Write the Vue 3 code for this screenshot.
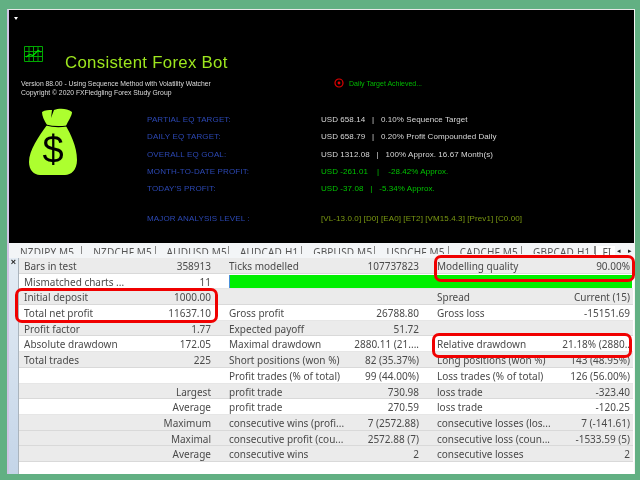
<script setup>
const labels = [
  { text: 'PARTIAL EQ TARGET:', value: 'USD 658.14   |   0.10% Sequence Target', cls: 'white' },
  { text: 'DAILY EQ TARGET:', value: 'USD 658.79   |   0.20% Profit Compounded Daily', cls: 'white' },
  { text: 'OVERALL EQ GOAL:', value: 'USD 1312.08   |   100% Approx. 16.67 Month(s)', cls: 'white' },
  { text: 'MONTH-TO-DATE PROFIT:', value: 'USD -261.01    |    -28.42% Approx.', cls: 'green' },
  { text: "TODAY'S PROFIT:", value: 'USD -37.08   |   -5.34% Approx.', cls: 'green' }
]
const tabs = ['NZDJPY M5', 'NZDCHF M5', 'AUDUSD M5', 'AUDCAD H1', 'GBPUSD M5', 'USDCHF M5', 'CADCHF M5', 'GBPCAD H1']
const rows = [
  ['Bars in test', '358913', 'Ticks modelled', '107737823', 'Modelling quality', '90.00%', 0],
  ['Mismatched charts ...', '11', '', '', '', '', 1],
  ['Initial deposit', '1000.00', '', '', 'Spread', 'Current (15)', 0],
  ['Total net profit', '11637.10', 'Gross profit', '26788.80', 'Gross loss', '-15151.69', 1],
  ['Profit factor', '1.77', 'Expected payoff', '51.72', '', '', 0],
  ['Absolute drawdown', '172.05', 'Maximal drawdown', '2880.11 (21....', 'Relative drawdown', '21.18% (2880..', 1],
  ['Total trades', '225', 'Short positions (won %)', '82 (35.37%)', 'Long positions (won %)', '143 (48.95%)', 0],
  ['', '', 'Profit trades (% of total)', '99 (44.00%)', 'Loss trades (% of total)', '126 (56.00%)', 1],
  ['', 'Largest', 'profit trade', '730.98', 'loss trade', '-323.40', 0],
  ['', 'Average', 'profit trade', '270.59', 'loss trade', '-120.25', 1],
  ['', 'Maximum', 'consecutive wins (profi...', '7 (2572.88)', 'consecutive losses (los...', '7 (-141.61)', 0],
  ['', 'Maximal', 'consecutive profit (cou...', '2572.88 (7)', 'consecutive loss (coun...', '-1533.59 (5)', 0],
  ['', 'Average', 'consecutive wins', '2', 'consecutive losses', '2', 0]
]
</script>

<template>
  <div class="page">
    <div class="window">
      <section class="chart">
        <div class="menu-arrow"></div>
        <header class="head">
          <svg class="logo" viewBox="0 0 19 16" width="19" height="16">
            <path d="M.5.5h18v15H.5zM.5 5.500h18M.5 10.500h18M5 .5v15M9.500.5v15M14 .5v15" fill="none" stroke="#00a800" />
            <path d="M2 11L6 8.500 9 9.500 14 4.500 17 6" fill="none" stroke="#00e000" stroke-width="1.200" />
          </svg>
          <h1 class="title">Consistent Forex Bot</h1>
        </header>
        <div class="info">
          <div class="version">
            <div>Version 88.00 - Using Sequence Method with Volatility Watcher</div>
            <div>Copyright © 2020 FXFledgling Forex Study Group</div>
          </div>
          <div class="achieved">
            <svg viewBox="0 0 10 10" width="10" height="10">
              <circle cx="5" cy="5" r="4" fill="none" stroke="#e00000" stroke-width="1.200" />
              <circle cx="5" cy="5" r="1.400" fill="#e00000" />
            </svg>
            <span>Daily Target Achieved...</span>
          </div>
        </div>
        <div class="main">
          <svg class="bag" viewBox="0 0 48 68" width="48" height="68">
            <path d="M18 17C15 12 13 8 13 4 16 2 20 2 23 2L22 10 25 2C30 0 38 0 43 4 43 8 39 13 37 18 41 25 48 38 48 52 48 62 42 67 36 67H11C5 67 0 62 0 54 0 42 10 28 18 17Z" fill="#adff2f" />
            <path d="M17 17C24 19 31 19 38 18" fill="none" stroke="#000" stroke-width="1.200" />
            <text x="24" y="55" text-anchor="middle" class="dollar">$</text>
          </svg>
          <div class="stats">
            <template v-for="l in labels" :key="l.text">
              <span class="lab">{{ l.text }}</span>
              <span :class="l.cls">{{ l.value }}</span>
            </template>
            <span class="lab major">MAJOR ANALYSIS LEVEL :</span>
            <span class="olive major">[VL-13.0.0] [D0] [EA0] [ET2] [VM15.4.3] [Prev1] [C0.00]</span>
          </div>
        </div>
      </section>

      <nav class="tabs">
        <span v-for="t in tabs" :key="t" class="tab">{{ t }}</span>
        <span class="tab active">FI</span>
        <span class="arrows"><i>◂</i><i>▸</i></span>
      </nav>

      <section class="report">
        <aside class="side">×</aside>
        <div class="table">
          <div v-for="(r, i) in rows" :key="i" class="row" :class="{ light: r[6] }">
            <span>{{ r[0] }}</span><span class="num">{{ r[1] }}</span>
            <template v-if="i === 1">
              <span class="bar"></span>
            </template>
            <template v-else>
              <span class="pad">{{ r[2] }}</span><span class="num">{{ r[3] }}</span>
              <span class="pad">{{ r[4] }}</span><span class="num">{{ r[5] }}</span>
            </template>
          </div>
          <div class="mark mark-a"></div>
          <div class="mark mark-b"></div>
          <div class="mark mark-c"></div>
        </div>
      </section>
    </div>
  </div>
</template>

<style>
html, body { margin: 0; background: #62b083; }
</style>

<style scoped>
.page {
  width: 640px; height: 480px; box-sizing: border-box;
  padding: 9px 5px 6px 7px; background: #62b083; overflow: hidden;
}
.window {
  height: 465px; display: flex; flex-direction: column;
  background: #fff; border-top: 1px solid #e6e6e6; border-left: 2px solid #cfc4e4;
  border-right: 1px solid #f4f4f4; box-sizing: border-box;
  filter: blur(.35px);
}
.chart {
  position: relative; height: 233px; flex: none; background: #000; overflow: hidden;
  font-family: "Liberation Sans", Arial, sans-serif; padding: 36px 0 0 12px; box-sizing: border-box;
}
.menu-arrow {
  position: absolute; left: 5px; top: 7px; width: 0; height: 0;
  border: 2px solid transparent; border-top: 3px solid #fff; border-bottom: 0;
}
.head { display: flex; align-items: flex-start; height: 31px; margin-left: 3px; }
.logo { flex: none; }
.title {
  margin: 7px 0 0 22px; font-size: 16.800px; line-height: 20px; font-weight: 400; color: #9de61e;
  letter-spacing: .3px;
}
.info { display: flex; height: 32px; font-size: 6.800px; line-height: 9px; color: #dcdcdc; }
.version { width: 313px; padding-top: 2px; }
.achieved { display: flex; align-items: flex-start; gap: 5px; color: #00b800; font-size: 7px; }
.achieved svg { margin-top: 1px; }
.achieved span { padding-top: 2px; }
.main { display: flex; align-items: flex-start; margin-top: -1px; }
.bag { flex: none; margin: 0 0 0 8px; }
.dollar { font-size: 38px; font-family: "Liberation Sans", Arial, sans-serif; fill: #000; }
.stats {
  display: grid; grid-template-columns: 174px auto; grid-auto-rows: 17.330px;
  margin: 3px 0 0 70px; font-size: 8px; line-height: 17.330px; white-space: pre; letter-spacing: .06px;
}
.lab { color: #2c48b4; letter-spacing: .14px; }
.white { color: #d8d8d8; }
.green { color: #00c400; }
.olive { color: #7c9a12; letter-spacing: .1px; }
.major { margin-top: 12px; }
.tabs {
  display: flex; height: 15px; flex: none; box-sizing: border-box; overflow: hidden;
  background: #f3f5f7; font-family: "Noto Sans", sans-serif; font-size: 10px; color: #555; line-height: 12px;
  padding: 3px 0 0 0; letter-spacing: .2px;
}
.tab { width: 73.300px; flex: none; box-sizing: border-box; padding-left: 11px; border-right: 1px solid #8a8a8a; white-space: nowrap; height: 8px; overflow: hidden; }
.tab.active { width: 20px; background: #fff; border-right: 0; border-left: 1px solid #8a8a8a; padding-left: 6px; height: 12px; }
.arrows { display: flex; gap: 6px; font-size: 7px; line-height: 9px; color: #222; height: 10px; background: #f3f5f7; padding-left: 2px; }
.arrows i { font-style: normal; }
.report { flex: 1; min-height: 0; display: flex; }
.side {
  width: 9px; flex: none; background: linear-gradient(#e4ecf4, #c4d5e8); color: #222;
  font: 700 9px/8px "Liberation Sans", sans-serif; text-align: center;
}
.table {
  flex: 1; position: relative; background: #fff; border-left: 1px solid #aab4bd;
  font-family: "Noto Sans", sans-serif; font-size: 10px; color: #4a4a4a;
}
.row {
  display: grid; grid-template-columns: 120px 67px 135px 73px 136px 75px;
  height: 15.700px; line-height: 16px; box-sizing: border-box; padding-left: 5px; margin-right: 1px;
  background: #ebebeb; border-bottom: 1px solid #d9d9d9; white-space: nowrap;
}
.row.light { background: #fff; border-bottom-color: #e6e6e6; }
.row span { min-width: 0; }
.num { text-align: right; }
.pad { padding-left: 18px; }
.bar {
  grid-column: 3 / 7; margin: 1px -2px 1px 18px; background: #00f000; border-left: 1px solid #4a90d9; height: 13px;
}
.mark { position: absolute; border: 3px solid #f00000; border-radius: 7px; box-sizing: border-box; }
.mark-a { left: -4px; top: 30px; width: 203px; height: 35px; }
.mark-b { left: 415px; top: -3px; width: 201px; height: 27px; }
.mark-c { left: 413px; top: 75px; width: 200px; height: 25px; }
</style>
